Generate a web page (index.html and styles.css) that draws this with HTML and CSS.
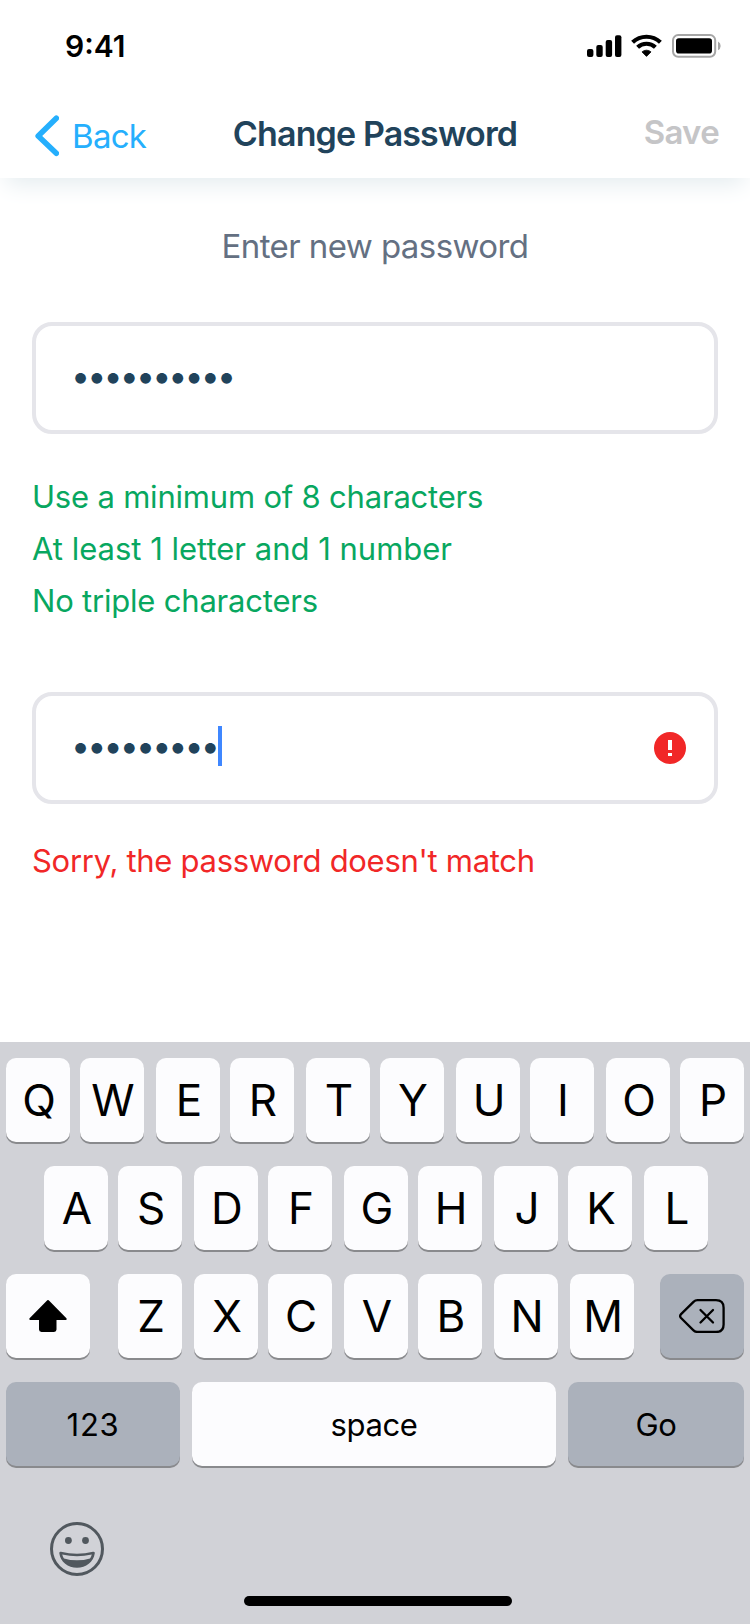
FILE: index.html
```html
<!DOCTYPE html>
<html lang="en">
<head>
<meta charset="utf-8">
<title>Change Password</title>
<link rel="stylesheet" href="styles.css">
</head>
<body>
<div class="screen">
  <header class="header">
    <div class="status">
      <span class="time">9:41</span>
      <svg class="status-icons" width="136" height="26" viewBox="0 0 136 26">
        <rect x="0" y="15" width="6.4" height="8" rx="2"/>
        <rect x="9.3" y="11" width="6.4" height="12" rx="2"/>
        <rect x="18.7" y="6" width="6.4" height="17" rx="2"/>
        <rect x="28" y="1.3" width="6.4" height="21.7" rx="2"/>
        <g fill="none" stroke="#000" stroke-width="4.2">
          <path d="M45.6 8.2 A20.4 20.4 0 0 1 73.4 8.2"/>
          <path d="M50.6 13.2 A13.2 13.2 0 0 1 68.4 13.2"/>
        </g>
        <path d="M59.5 22.4 L55 17.9 A6.8 6.8 0 0 1 64 17.9 Z" stroke="#000" stroke-width="0.8" stroke-linejoin="round"/>
        <rect x="86" y="1.1" width="42.2" height="21.6" rx="5.2" fill="none" stroke="#a6a6a6" stroke-width="2"/>
        <rect x="89" y="4.2" width="36" height="15.3" rx="2.8"/>
        <path d="M131 7.6 A4.8 4.8 0 0 1 131 16.2 Z" fill="#a6a6a6"/>
      </svg>
    </div>
    <nav class="nav">
      <a class="back">
        <svg width="24" height="42" viewBox="0 0 24 42"><path d="M21.3 3.3 L3.2 21 L21.3 38.2" fill="none" stroke="#25affd" stroke-width="5.6" stroke-linecap="round" stroke-linejoin="round"/></svg>
        <span class="back-label">Back</span>
      </a>
      <h1 class="title">Change Password</h1>
      <span class="save">Save</span>
    </nav>
  </header>
  <main class="content">
    <p class="prompt">Enter new password</p>
    <div class="field"><span class="dots">••••••••••</span></div>
    <ul class="rules">
      <li class="rule">Use a minimum of 8 characters</li>
      <li class="rule rule-wide">At least 1 letter and 1 number</li>
      <li class="rule">No triple characters</li>
    </ul>
    <div class="field">
      <span class="dots">•••••••••</span><span class="caret"></span>
      <svg class="alert" width="32" height="32" viewBox="0 0 32 32"><circle cx="16" cy="16" r="16" fill="#f12727"/><path d="M14 8h4v10h-4zM14 21h4v3h-4z" fill="#fff"/></svg>
    </div>
    <p class="error">Sorry, the password doesn't match</p>
  </main>
  <section class="keyboard">
    <div class="row row-1">
      <span class="key">Q</span><span class="key">W</span><span class="key">E</span><span class="key">R</span><span class="key">T</span><span class="key">Y</span><span class="key">U</span><span class="key">I</span><span class="key">O</span><span class="key">P</span>
    </div>
    <div class="row row-2">
      <span class="key">A</span><span class="key">S</span><span class="key">D</span><span class="key">F</span><span class="key">G</span><span class="key">H</span><span class="key">J</span><span class="key">K</span><span class="key">L</span>
    </div>
    <div class="row row-3">
      <span class="key shift"><svg width="40" height="34" viewBox="0 0 40 34"><path d="M20 2 L37.7 20 H27.5 V30.6 Q27.5 32 26 32 H13.5 Q12 32 12 30.6 V20 H2.3 Z" stroke="#000" stroke-width="2" stroke-linejoin="round"/></svg></span>
      <span class="key">Z</span><span class="key">X</span><span class="key">C</span><span class="key">V</span><span class="key">B</span><span class="key">N</span><span class="key">M</span>
      <span class="key grey delete"><svg width="46" height="34" viewBox="0 0 46 34"><g fill="none" stroke="#000" stroke-width="2.3" stroke-linecap="round" stroke-linejoin="round"><path d="M18.5 1.2 H37 Q44.6 1.2 44.6 8.8 V25.4 Q44.6 33 37 33 H18.5 Q16.3 33 14.5 31.3 L1.8 18.8 Q0.4 17.1 1.8 15.4 L14.5 2.9 Q16.3 1.2 18.5 1.2 Z"/><path d="M21.5 11 L34 23.5 M34 11 L21.5 23.5"/></g></svg></span>
    </div>
    <div class="row row-4">
      <span class="key grey small numbers">123</span>
      <span class="key small space">space</span>
      <span class="key grey small go">Go</span>
    </div>
    <svg class="emoji" width="54" height="54" viewBox="0 0 54 54">
      <circle cx="27" cy="27" r="25.5" fill="none" stroke="#51585e" stroke-width="3"/>
      <circle cx="18.4" cy="18.5" r="3.4" fill="#51585e"/><circle cx="35.5" cy="18.5" r="3.4" fill="#51585e"/>
      <path fill="#51585e" fill-rule="evenodd" d="M9.300 31.200 Q9.200 29.600 11 29.800 Q27 33.800 43 29.800 Q45 29.600 44.800 31.200 C43.500 40 36 45.700 27 45.700 C18 45.700 10.500 40 9.300 31.200 Z M12.200 32.600 Q27 35.800 41.800 32.600 Q41.200 35 40 36.400 Q34 38.300 27 38.300 Q20 38.300 14 36.400 Q12.800 35 12.200 32.600 Z"/>
    </svg>
    <div class="home"></div>
  </section>
</div>
</body>
</html>
```
FILE: styles.css
```css
* { box-sizing: border-box; margin: 0; padding: 0; }
body { background: #fff; }
.screen {
  width: 750px; height: 1624px;
  display: flex; flex-direction: column;
  overflow: hidden;
  background: #fff;
  font-family: Inter, "Liberation Sans", sans-serif;
  font-weight: 370;
}
.header { height: 178px; background: #fff; box-shadow: 0 12px 22px -6px #e4ecef; }
.status {
  height: 92px; padding: 0 29px 0 65px;
  display: flex; align-items: center; justify-content: space-between;
}
.time { font-size: 30px; font-weight: 600; line-height: 36px; }
.status-icons { display: block; margin: 2px -2px 0 0; }
.nav {
  height: 86px; padding: 0 31px 0 35px;
  display: grid; grid-template-columns: 1fr auto 1fr; align-items: start;
}
.back { display: flex; align-items: flex-start; gap: 13px; color: #25affd; padding-top: 23px; }
.back svg { display: block; }
.back-label { font-size: 33px; line-height: 42px; letter-spacing: -0.7px; }
.title { font-size: 34px; line-height: 42px; font-weight: 600; color: #21435b; padding-top: 21px; margin-left: -4px; letter-spacing: -0.87px; }
.save { font-size: 33px; line-height: 42px; font-weight: 600; color: #c5c5c7; padding-top: 19px; text-align: right; letter-spacing: -0.7px; }
.content { flex: 1; padding: 46px 32px 0; }
.prompt { font-size: 33px; line-height: 44px; text-align: center; color: #647082; letter-spacing: -0.58px; }
.field {
  height: 112px; margin-top: 54px; padding: 0 28px 0 35px;
  display: flex; align-items: center;
  border: 4px solid #e5e5ea; border-radius: 20px;
}
.dots { font-size: 34px; line-height: 40px; font-weight: 400; color: #21435b; letter-spacing: -2.9px; padding-bottom: 4px; }
.caret { width: 4px; height: 40px; background: #3f87ff; margin: -4px 0 0 1px; }
.alert { display: block; margin-left: auto; }
.rules { list-style: none; margin-top: 37px; font-size: 31px; line-height: 52px; color: #08a760; }
.rule { letter-spacing: -0.2px; }
.rule-wide { letter-spacing: 0; }
.rules + .field { margin-top: 65px; }
.error { font-size: 31px; line-height: 52px; margin-top: 31px; color: #f12727; letter-spacing: -0.29px; }
.keyboard {
  height: 582px; padding: 16px 6px 0;
  background: #d1d2d7;
  display: flex; flex-direction: column; align-items: stretch;
}
.row { display: flex; justify-content: space-between; height: 84px; margin-bottom: 24px; }
.row-2 { padding: 0 36px 0 38px; }
.key {
  width: 64px; height: 84px; flex-shrink: 0;
  display: flex; align-items: center; justify-content: center;
  background: #fcfcfe; border-radius: 10px; box-shadow: 0 2px 0 #898a8d;
  font-size: 44px; line-height: 54px; color: #000; padding-left: 2px;
}
.row-1, .row-2, .row-3 { justify-content: flex-start; gap: 10px; }
.row-1 .key:nth-child(even), .row-2 .key:nth-child(even) { margin-right: 2px; }
.row-3 .key:nth-child(3), .row-3 .key:nth-child(5), .row-3 .key:nth-child(7), .row-3 .key:nth-child(8) { margin-left: 2px; }
.key.shift { width: 84px; margin-right: 18px; padding: 0; }
.key.delete { width: 84px; margin-left: auto; padding: 0; }
.key.grey { background: #abb1bb; }
.key.small { font-size: 31px; line-height: 40px; padding: 2px 0 0; letter-spacing: -0.4px; }
.key.numbers { width: 174px; letter-spacing: 0.7px; }
.key.space { width: 364px; }
.key.go { width: 176px; }
.emoji { display: block; margin: 32px 0 0 44px; }
.home { width: 268px; height: 10px; margin: 20px 0 0 238px; border-radius: 5px; background: #000; }
```
